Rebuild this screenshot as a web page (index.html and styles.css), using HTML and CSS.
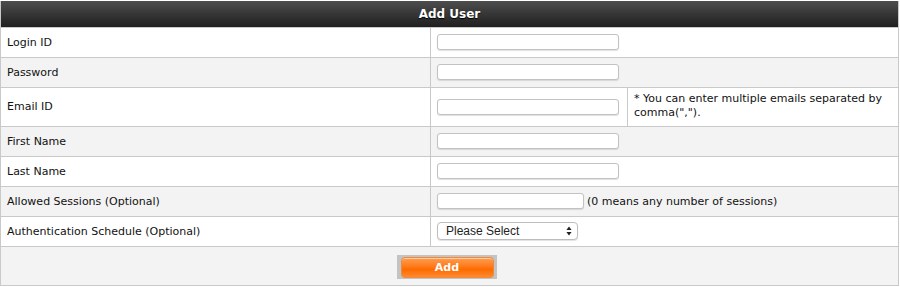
FILE: index.html
```html
<!DOCTYPE html>
<html lang="en">
<head>
  <meta charset="UTF-8">
  <title>Add User</title>
  <link rel="stylesheet" href="styles.css">
</head>
<body>
  <table class="form-table">
    <tr>
      <th class="form-title" colspan="3">Add User</th>
    </tr>
    <tr>
      <td class="label">Login ID</td>
      <td colspan="2"><input type="text" class="text-field"></td>
    </tr>
    <tr class="alt">
      <td class="label">Password</td>
      <td colspan="2"><input type="password" class="text-field"></td>
    </tr>
    <tr class="tall">
      <td class="label">Email ID</td>
      <td class="field-cell"><input type="text" class="text-field"></td>
      <td class="hint">* You can enter multiple emails separated by comma(",").</td>
    </tr>
    <tr class="alt">
      <td class="label">First Name</td>
      <td colspan="2"><input type="text" class="text-field"></td>
    </tr>
    <tr>
      <td class="label">Last Name</td>
      <td colspan="2"><input type="text" class="text-field"></td>
    </tr>
    <tr class="alt">
      <td class="label">Allowed Sessions (Optional)</td>
      <td colspan="2"><input type="text" class="text-field short"><span class="note">(0 means any number of sessions)</span></td>
    </tr>
    <tr>
      <td class="label">Authentication Schedule (Optional)</td>
      <td colspan="2">
        <span class="select-wrap">
          <select class="select-field">
            <option>Please Select</option>
          </select>
          <svg class="select-arrows" viewBox="0 0 6 10" xmlns="http://www.w3.org/2000/svg">
            <path d="M3 0.5L5.6 4H0.4z M3 9.5L5.6 6H0.4z"/>
          </svg>
        </span>
      </td>
    </tr>
    <tr class="alt actions">
      <td colspan="3">
        <span class="btn-frame"><button class="btn-add">Add</button></span>
      </td>
    </tr>
  </table>
</body>
</html>
```

FILE: styles.css
```css
* {
  box-sizing: border-box;
}

body {
  margin: 0;
  padding-top: 1px;
  background: #fff;
  font-family: "DejaVu Sans", Verdana, sans-serif;
  font-size: 11px;
  color: #111;
}

/* form table */
.form-table {
  width: 899px;
  border-collapse: collapse;
  border: 1px solid #c9c9c9;
  border-top: none;
}

.form-title {
  height: 26px;
  padding: 0;
  background: linear-gradient(#4d4d4d, #1f1f1f);
  color: #fff;
  font-size: 12px;
  font-weight: bold;
  text-shadow: 0 1px 1px #000;
  text-align: center;
}

.form-table td {
  height: 30px;
  padding: 0 6px;
  border: 1px solid #c9c9c9;
  vertical-align: middle;
}

.form-table td.label {
  width: 430px;
}

.form-table td.field-cell {
  width: 197px;
}

.form-table tr.tall td {
  height: 39px;
}

.form-table tr.alt td {
  background: #f3f3f3;
}

.form-table td.hint {
  line-height: 14px;
  padding: 0 6px 2px 6px;
}

/* fields */
.text-field {
  width: 182px;
  height: 16px;
  border: 1px solid #c2c2c2;
  border-radius: 3px;
  background: #fff;
  box-shadow: 0 1px 1px rgba(0, 0, 0, 0.12);
  vertical-align: middle;
}

.text-field.short {
  width: 147px;
}

.note {
  margin-left: 3px;
  vertical-align: middle;
}

.select-wrap {
  position: relative;
  display: inline-block;
  vertical-align: middle;
}

.select-field {
  -webkit-appearance: none;
  appearance: none;
  display: block;
  width: 141px;
  height: 18px;
  padding: 0 0 0 8px;
  border: 1px solid #bdbdbd;
  border-radius: 4px;
  background: #fff;
  box-shadow: 0 1px 1px rgba(0, 0, 0, 0.12);
  font-family: "Liberation Sans", Arial, sans-serif;
  font-size: 12px;
  color: #222;
}

.select-arrows {
  position: absolute;
  right: 6px;
  top: 4px;
  width: 6px;
  height: 10px;
  fill: #222;
}

/* action row */
.form-table tr.actions td {
  height: 39px;
  text-align: center;
  padding: 0;
}

.btn-frame {
  display: inline-block;
  margin-left: -6px;
  margin-top: 2px;
  padding: 2px 3px 1px 4px;
  background: #c3c3c3;
}

.btn-add {
  display: block;
  width: 93px;
  height: 21px;
  padding: 0;
  border: 1px solid #f08a3a;
  border-radius: 4px;
  background: linear-gradient(#ff9d4f 0%, #ff7a1a 45%, #ff6a00 60%, #ff8a30 100%);
  box-shadow: inset 0 1px 0 rgba(255, 255, 255, 0.5);
  color: #fff;
  font-family: "DejaVu Sans", Verdana, sans-serif;
  font-size: 11px;
  font-weight: bold;
}
```
